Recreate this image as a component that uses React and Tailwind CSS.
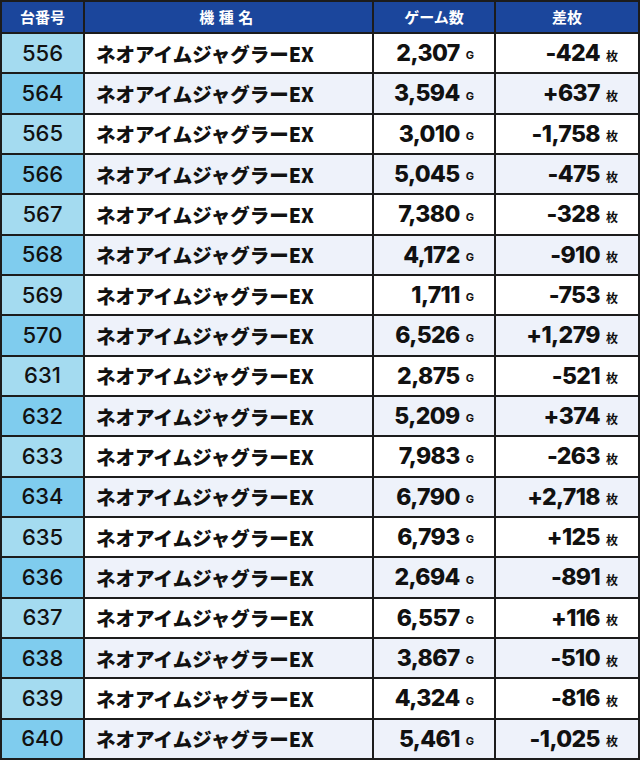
const rows = [
  ["556", "2,307", "-424"],
  ["564", "3,594", "+637"],
  ["565", "3,010", "-1,758"],
  ["566", "5,045", "-475"],
  ["567", "7,380", "-328"],
  ["568", "4,172", "-910"],
  ["569", "1,711", "-753"],
  ["570", "6,526", "+1,279"],
  ["631", "2,875", "-521"],
  ["632", "5,209", "+374"],
  ["633", "7,983", "-263"],
  ["634", "6,790", "+2,718"],
  ["635", "6,793", "+125"],
  ["636", "2,694", "-891"],
  ["637", "6,557", "+116"],
  ["638", "3,867", "-510"],
  ["639", "4,324", "-816"],
  ["640", "5,461", "-1,025"],
];

const App = () => {
  return (
    <div className="h-[760px] w-[640px] bg-white font-['Noto_Sans_CJK_JP','Liberation_Sans',sans-serif]">
      <div className="grid h-[760px] w-[640px] grid-cols-[81px_287px_120px_142px] grid-rows-[30px_repeat(18,1fr)] gap-[2px] bg-[#1c1c1c] p-[2px]">
        <div className="flex items-center justify-center bg-[#1b469c] text-[15px] font-bold text-white">台番号</div>
        <div className="flex items-center justify-center bg-[#1b469c] text-[15px] font-bold tracking-[0.3em] text-white">機種名</div>
        <div className="flex items-center justify-center bg-[#1b469c] text-[15px] font-bold text-white">ゲーム数</div>
        <div className="flex items-center justify-center bg-[#1b469c] text-[15px] font-bold text-white">差枚</div>
        {rows.map(([no, games, diff], index) => {
          const even = index % 2 === 1;
          return [
            <div key={`${no}_no`} className={`flex items-center justify-center font-['Inter',sans-serif] text-[22px] font-medium text-[#111] ${even ? "bg-[#7fccee]" : "bg-[#a4dbf0]"}`}>{no}</div>,
            <div key={`${no}_name`} className={`flex items-center pl-[11px] text-[19.5px] font-black text-[#111] ${even ? "bg-[#eef2fa]" : "bg-white"}`}>ネオアイムジャグラーEX</div>,
            <div key={`${no}_games`} className={`flex items-center justify-end pr-[20px] text-[#111] ${even ? "bg-[#eef2fa]" : "bg-white"}`}>
              <span className="font-['Inter',sans-serif] text-[23px] font-extrabold tracking-[-0.6px]">{games}</span>
              <span className="ml-[6px] mt-[5px] font-['Inter',sans-serif] text-[11px] font-bold">G</span>
            </div>,
            <div key={`${no}_diff`} className={`flex items-center justify-end pr-[20px] text-[#111] ${even ? "bg-[#eef2fa]" : "bg-white"}`}>
              <span className="font-['Inter',sans-serif] text-[23px] font-extrabold tracking-[-0.6px]">{diff}</span>
              <span className="ml-[6px] mt-[5px] text-[12px] font-bold">枚</span>
            </div>,
          ];
        })}
      </div>
    </div>
  );
};

export default App;
